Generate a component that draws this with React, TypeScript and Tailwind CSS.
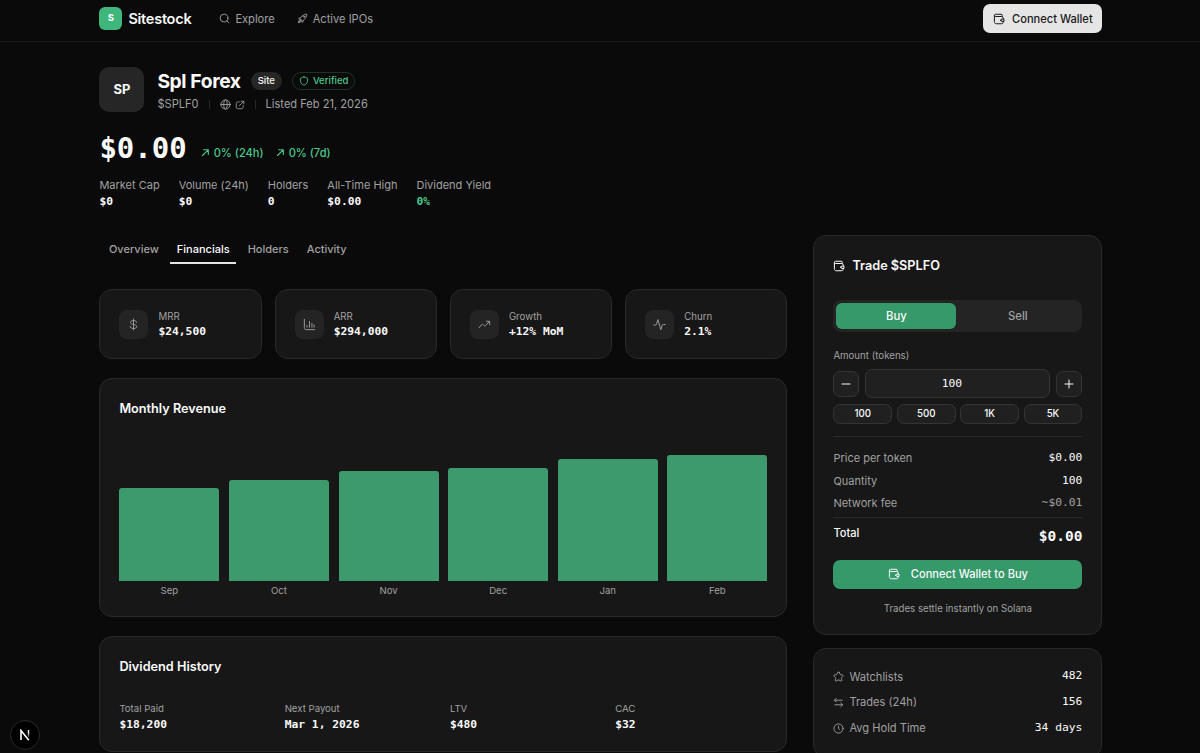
import type { ReactNode, SVGProps } from "react";
import { clsx } from "clsx";

type IconProps = SVGProps<SVGSVGElement>;

function Icon({ children, ...props }: IconProps & { children: ReactNode }) {
  return (
    <svg
      viewBox="0 0 24 24"
      fill="none"
      stroke="currentColor"
      strokeWidth={2}
      strokeLinecap="round"
      strokeLinejoin="round"
      {...props}
    >
      {children}
    </svg>
  );
}

const WalletIcon = (props: IconProps) => (
  <Icon {...props}>
    <path d="M15.500 14.500a2.300 2.300 0 0 1 2.300-2.300H22v4.600h-4.200a2.300 2.300 0 0 1-2.300-2.300Z" />
    <path d="M20.500 12v-1c0-2.800-1-4-4-4H5.300A2.500 2.500 0 0 1 2.800 4.800V17c0 3.200 1.300 4.500 4.500 4.500h9.200c3 0 4-1.200 4-4v-.700" />
    <path d="M18.500 7V5c0-1.800-.8-2.500-2.500-2.500H5.300A2.400 2.400 0 0 0 2.800 4.800" />
  </Icon>
);

const SearchIcon = (props: IconProps) => (
  <Icon {...props}>
    <circle cx="11" cy="11" r="8.500" />
    <path d="m17.500 17.500 4 4" />
  </Icon>
);

const RocketIcon = (props: IconProps) => (
  <Icon {...props}>
    <path d="M11.800 6.500 8.500 9.800c-1.800.1-3.600.8-5 2.700l4.200.9 3 3 .9 4.200c1.900-1.400 2.600-3.200 2.700-5l3.300-3.300c2.800-2.800 3.900-6 3.800-9.700-3.700-.1-6.800 1.100-9.600 3.900Z" />
    <path d="M7 14.500c-2.500.5-3.800 2.500-4 6.500 4-.2 6-1.500 6.500-4M3 21l6-6" />
    <circle cx="15.800" cy="8.200" r="1.300" />
  </Icon>
);

const ShieldIcon = (props: IconProps) => (
  <Icon {...props}>
    <path d="M12 2c-1.500 0-4 1.800-6.200 2.200C4.200 4.500 3.500 5 3.500 6.500v5c0 5.500 4 9 8.500 10.500 4.500-1.500 8.500-5 8.500-10.500v-5c0-1.500-.7-2-2.300-2.300C16 3.800 13.500 2 12 2Z" />
  </Icon>
);

const GlobeIcon = (props: IconProps) => (
  <Icon {...props}>
    <circle cx="12" cy="12" r="10" />
    <ellipse cx="12" cy="12" rx="4" ry="10" />
    <path d="M2 12h20" />
  </Icon>
);

const LinkIcon = (props: IconProps) => (
  <Icon {...props}>
    <path d="M10.500 4.500H7.500c-3 0-4.500 1.300-4.500 4.500v7.500c0 3.200 1.300 4.500 4.500 4.500H15c3.200 0 4.500-1.500 4.500-4.500v-3" />
    <path d="M14.500 3H21v6.500M20.500 3.500 10.500 13.500" />
  </Icon>
);

const ArrowUpRightIcon = (props: IconProps) => (
  <Icon {...props} strokeWidth={3}>
    <path d="M4 20 18.500 5.500M7 4.500h12.500V17" />
  </Icon>
);

const DollarIcon = (props: IconProps) => (
  <Icon {...props}>
    <path d="M17.500 8c0-2-2-3.500-5.500-3.500S6.500 6 6.500 8.200c0 4.800 11.500 2.600 11.500 7.600 0 2.200-2.300 3.700-6 3.700s-6-1.600-6-4M12 2v20" />
  </Icon>
);

const ChartIcon = (props: IconProps) => (
  <Icon {...props}>
    <path d="M2.500 2.500v15c0 3 1 4 4 4h15M7.500 17v-3M12 17V6.500M16.500 17v-7M20.500 17v-4" />
  </Icon>
);

const TrendIcon = (props: IconProps) => (
  <Icon {...props}>
    <path d="m2 18 4.500-5.500c1.200-1.500 2.200-1.500 3.400 0l.9 1.200c1.200 1.500 2.300 1.500 3.400-.1L21 6.500M15.500 6H21.500v6" />
  </Icon>
);

const PulseIcon = (props: IconProps) => (
  <Icon {...props}>
    <path d="M1.500 13h3c1.200 0 1.700-.4 2-1.500L9 3l5.500 18.500 2.500-8c.4-1.200 1-1.500 2-1.500h3.500" />
  </Icon>
);

const StarIcon = (props: IconProps) => (
  <Icon {...props}>
    <path d="m13.700 3.400 1.800 3.600c.3.500.9 1 1.500 1.100l3.200.5c2 .4 2.500 1.800 1.100 3.300l-2.500 2.500c-.4.400-.7 1.200-.5 1.800l.7 3.100c.6 2.400-.7 3.400-2.900 2.100l-3-1.800c-.6-.3-1.500-.3-2.100 0l-3 1.800c-2.200 1.300-3.500.3-2.900-2.100l.7-3.100c.1-.6-.1-1.400-.5-1.800l-2.500-2.500C1.300 10.400 1.800 9 3.800 8.600L7 8.100c.5-.1 1.200-.6 1.500-1.100l1.800-3.600c.9-1.900 2.500-1.900 3.400 0Z" />
  </Icon>
);

const TransferIcon = (props: IconProps) => (
  <Icon {...props}>
    <path d="M20 7H3M7 3 3 7l4 4M4 17h17M17 13l4 4-4 4" />
  </Icon>
);

const ClockIcon = (props: IconProps) => (
  <Icon {...props}>
    <circle cx="12" cy="12" r="10" />
    <path d="M12 7v5l3 2.500" />
  </Icon>
);

const MinusIcon = (props: IconProps) => (
  <Icon {...props}>
    <path d="M4 12h16" />
  </Icon>
);

const PlusIcon = (props: IconProps) => (
  <Icon {...props}>
    <path d="M12 4v16M4 12h16" />
  </Icon>
);

const mono = "font-['DejaVu_Sans_Mono',monospace]";
const card = "rounded-[13px] border border-[#292929] bg-[#171717]";

const quickStats = [
  { label: "Market Cap", value: "$0" },
  { label: "Volume (24h)", value: "$0" },
  { label: "Holders", value: "0" },
  { label: "All-Time High", value: "$0.00" },
  { label: "Dividend Yield", value: "0%", positive: true },
];

const metrics = [
  { label: "MRR", value: "$24,500", icon: DollarIcon },
  { label: "ARR", value: "$294,000", icon: ChartIcon },
  { label: "Growth", value: "+12% MoM", icon: TrendIcon },
  { label: "Churn", value: "2.1%", icon: PulseIcon },
];

const revenue = [
  { month: "Sep", height: 93.5 },
  { month: "Oct", height: 101.5 },
  { month: "Nov", height: 110 },
  { month: "Dec", height: 113.5 },
  { month: "Jan", height: 122.5 },
  { month: "Feb", height: 126 },
];

const dividends = [
  { label: "Total Paid", value: "$18,200" },
  { label: "Next Payout", value: "Mar 1, 2026" },
  { label: "LTV", value: "$480" },
  { label: "CAC", value: "$32" },
];

const activity = [
  { label: "Watchlists", value: "482", icon: StarIcon },
  { label: "Trades (24h)", value: "156", icon: TransferIcon },
  { label: "Avg Hold Time", value: "34 days", icon: ClockIcon },
];

function Header() {
  return (
    <header className="h-[42px] border-b border-[#191919]">
      <div className="ml-[99.400px] flex h-[37px] w-[1003px] items-center">
        <div className="flex items-center gap-[6px]">
          <div className="flex size-[23px] items-center justify-center rounded-[6px] bg-[#3fb67c] text-[9.500px] font-bold text-white">
            S
          </div>
          <span className="text-[14.500px] font-semibold tracking-[-0.25px]">Sitestock</span>
        </div>
        <nav className="ml-[28px] flex items-center gap-[22px] pt-px text-[11.100px] text-[#a1a1a1]">
          <a className="flex items-center gap-[5px]">
            <SearchIcon className="size-[11px]" />
            Explore
          </a>
          <a className="flex items-center gap-[5px]">
            <RocketIcon className="size-[11px]" />
            Active IPOs
          </a>
        </nav>
        <button className="ml-auto flex h-[29px] w-[119px] items-center justify-center gap-[7px] rounded-[7px] bg-[#e5e5e5] pt-px text-[11.100px] font-medium text-[#171717]">
          <WalletIcon className="size-[12px]" />
          Connect Wallet
        </button>
      </div>
    </header>
  );
}

function Hero() {
  return (
    <section>
      <div className="flex items-start gap-[13px]">
        <div className="flex size-[45px] items-center justify-center rounded-[10px] bg-[#262626] text-[13px] font-bold">
          SP
        </div>
        <div className="pt-px">
          <div className="flex h-[26px] items-center">
            <h1 className="text-[19.300px] font-bold tracking-[-0.4px]">Spl Forex</h1>
            <span className="ml-[10px] flex h-[18px] items-center rounded-full bg-[#262626] px-[7px] text-[9.500px] font-medium">
              Site
            </span>
            <span className="ml-[10px] flex h-[18px] items-center gap-[4px] rounded-full border border-[#1d3328] px-[6px] text-[9.500px] font-medium text-[#4cc88c]">
              <ShieldIcon className="size-[10px]" />
              Verified
            </span>
          </div>
          <div className="flex h-[21px] items-center text-[11.100px] text-[#a1a1a1]">
            <span>$SPLF0</span>
            <span className="mx-[10px] h-[9px] w-px bg-[#292929]" />
            <GlobeIcon className="size-[11px]" />
            <LinkIcon className="ml-[4px] size-[10px]" />
            <span className="mx-[10px] h-[9px] w-px bg-[#292929]" />
            <span>Listed Feb 21, 2026</span>
          </div>
        </div>
      </div>

      <div className="mt-[14px] flex h-[38px] items-center">
        <span className={clsx(mono, "text-[29px] leading-none font-bold")}>$0.00</span>
        <div className="mt-[10px] ml-[14px] flex gap-[12px] text-[11.100px] font-medium text-[#4cc88c]">
          <span className="flex items-center gap-[4px]">
            <ArrowUpRightIcon className="size-[9px]" />
            0% (24h)
          </span>
          <span className="flex items-center gap-[4px]">
            <ArrowUpRightIcon className="size-[9px]" />
            0% (7d)
          </span>
        </div>
      </div>

      <dl className="mt-[10px] flex gap-[19px] text-[11.300px] leading-[16px]">
        {quickStats.map((stat) => (
          <div key={stat.label}>
            <dt className="text-[11px] text-[#a1a1a1]">{stat.label}</dt>
            <dd className={clsx(mono, "mt-px font-semibold", stat.positive && "text-[#4cc88c]")}>{stat.value}</dd>
          </div>
        ))}
      </dl>
    </section>
  );
}

function Tabs() {
  return (
    <nav className="flex h-[29px] gap-[5px] px-[3px] text-[11px] font-medium text-[#a1a1a1]">
      {["Overview", "Financials", "Holders", "Activity"].map((tab) => (
        <button
          key={tab}
          className={clsx(
            "border-b-2 px-[6.500px] pt-[2px]",
            tab === "Financials" ? "border-[#e5e5e5] text-[#fafafa]" : "border-transparent"
          )}
        >
          {tab}
        </button>
      ))}
    </nav>
  );
}

function Metrics() {
  return (
    <div className="mt-[25px] grid grid-cols-4 gap-[13px]">
      {metrics.map(({ label, value, icon: MetricIcon }) => (
        <div key={label} className={clsx(card, "flex h-[70px] items-center gap-[10px] px-[19px]")}>
          <div className="flex size-[29px] items-center justify-center rounded-[8px] bg-[#242424] text-[#a1a1a1]">
            <MetricIcon className="size-[13px]" strokeWidth={1.7} />
          </div>
          <div className="pt-px">
            <p className="text-[9.700px] leading-[14px] text-[#a1a1a1]">{label}</p>
            <p className={clsx(mono, "text-[11.300px] leading-[15px] font-semibold")}>{value}</p>
          </div>
        </div>
      ))}
    </div>
  );
}

function RevenueChart() {
  return (
    <section className={clsx(card, "mt-[19px] flex h-[239px] flex-col px-[19px] pt-[20px] pb-[18px]")}>
      <h2 className="text-[12.700px] leading-[19px] font-semibold">Monthly Revenue</h2>
      <div className="mt-auto flex items-end gap-[9.600px]">
        {revenue.map((bar) => (
          <div key={bar.month} className="flex-1 text-center">
            <div className="rounded-t-[3px] bg-[#3d9a6c]" style={{ height: bar.height }} />
            <p className="mt-[3px] text-[9.600px] leading-[14px] text-[#a1a1a1]">{bar.month}</p>
          </div>
        ))}
      </div>
    </section>
  );
}

function Dividends() {
  return (
    <section className={clsx(card, "mt-[19px] h-[116px] px-[19px] pt-[20px]")}>
      <h2 className="text-[12.700px] leading-[19px] font-semibold">Dividend History</h2>
      <div className="mt-[26px] grid grid-cols-4 gap-[13px]">
        {dividends.map((item) => (
          <div key={item.label}>
            <p className="text-[9.600px] leading-[14px] text-[#a1a1a1]">{item.label}</p>
            <p className={clsx(mono, "text-[11.300px] leading-[17px] font-semibold")}>{item.value}</p>
          </div>
        ))}
      </div>
    </section>
  );
}

function TradePanel() {
  return (
    <section className={clsx(card, "h-[400px] px-[19px] pt-[20px]")}>
      <h2 className="flex h-[19px] items-center gap-[7px] text-[12.700px] font-semibold">
        <WalletIcon className="size-[12px]" />
        Trade $SPLFO
      </h2>

      <div className="mt-[25px] flex h-[32px] rounded-[8px] bg-[#242424] p-[3px] text-[11.300px] font-medium">
        <button className="w-[120px] rounded-[6px] bg-[#35996a]">Buy</button>
        <button className="flex-1 text-[#a1a1a1]">Sell</button>
      </div>

      <p className="mt-[17px] text-[9.700px] leading-[14px] text-[#a1a1a1]">Amount (tokens)</p>
      <div className="mt-[6px] flex items-center gap-[6px]">
        <button className="flex size-[26px] items-center justify-center rounded-[7px] border border-[#343434] bg-[#202020]">
          <MinusIcon className="size-[12px]" />
        </button>
        <div
          className={clsx(
            mono,
            "flex h-[29px] flex-1 items-center justify-center rounded-[7px] border border-[#343434] bg-[#202020] pt-px pr-[12px] text-[11.300px]"
          )}
        >
          100
        </div>
        <button className="flex size-[26px] items-center justify-center rounded-[7px] border border-[#343434] bg-[#202020]">
          <PlusIcon className="size-[12px]" />
        </button>
      </div>
      <div className="mt-[6px] grid grid-cols-4 gap-[4.500px] text-[9.700px] font-medium">
        {["100", "500", "1K", "5K"].map((amount) => (
          <button key={amount} className="h-[20px] rounded-[7px] border border-[#343434] bg-[#202020]">
            {amount}
          </button>
        ))}
      </div>

      <div className="mt-[12px] border-t border-[#292929] pt-[10px] text-[11.300px] leading-[22.600px] text-[#a1a1a1]">
        <div className="flex justify-between">
          <span className="text-[11px]">Price per token</span>
          <span className={clsx(mono, "text-[#fafafa]")}>$0.00</span>
        </div>
        <div className="flex justify-between">
          <span className="text-[11px]">Quantity</span>
          <span className={clsx(mono, "text-[#fafafa]")}>100</span>
        </div>
        <div className="flex justify-between">
          <span className="text-[11px]">Network fee</span>
          <span className={mono}>~$0.01</span>
        </div>
      </div>
      <div className="mt-[2px] flex h-[43px] justify-between border-t border-[#292929] pt-[7px] font-medium">
        <span className="text-[11.100px] leading-[16px]">Total</span>
        <span className={clsx(mono, "text-[14.500px] leading-[22px] font-semibold")}>$0.00</span>
      </div>

      <button className="flex h-[29px] w-full items-center justify-center gap-[11px] rounded-[7px] bg-[#35996a] text-[11.100px] font-medium">
        <WalletIcon className="size-[12px]" />
        Connect Wallet to Buy
      </button>
      <p className="mt-[13px] text-center text-[9.700px] leading-[14px] text-[#a1a1a1]">
        Trades settle instantly on Solana
      </p>
    </section>
  );
}

function ActivityPanel() {
  return (
    <section className={clsx(card, "mt-[13px] h-[110px] px-[19px] pt-[15px] text-[11.300px]")}>
      {activity.map(({ label, value, icon: RowIcon }) => (
        <div key={label} className="flex h-[25.800px] items-center">
          <RowIcon className="mr-[5px] size-[11px] text-[#a1a1a1]" />
          <span className="text-[11.100px] text-[#a1a1a1]">{label}</span>
          <span className={clsx(mono, "ml-auto")}>{value}</span>
        </div>
      ))}
    </section>
  );
}

function DevBadge() {
  return (
    <div className="fixed bottom-[3px] left-[10px] flex size-[30px] items-center justify-center rounded-full border border-[#2a2a2a] bg-black">
      <svg viewBox="0 0 12 12" className="size-[12px]" fill="none" strokeWidth={1.6}>
        <defs>
          <linearGradient id="stem" x1="0" y1="0" x2="0" y2="1">
            <stop offset="0.3" stopColor="#fff" />
            <stop offset="1" stopColor="#fff" stopOpacity="0" />
          </linearGradient>
        </defs>
        <path d="M2 11V1.500L9.800 11.300" stroke="#fff" />
        <rect x="8.800" y="1" width="1.400" height="8" fill="url(#stem)" />
      </svg>
    </div>
  );
}

export default function App() {
  return (
    <div className="h-[753px] overflow-hidden bg-[#0a0a0a] font-[Inter,sans-serif] text-[#fafafa]">
      <Header />
      <main className="ml-[99.400px] w-[1003px] pt-[25px]">
        <Hero />
        <div className="mt-[25px] flex gap-[26px]">
          <div className="w-[688px]">
            <Tabs />
            <Metrics />
            <RevenueChart />
            <Dividends />
          </div>
          <aside className="flex-1">
            <TradePanel />
            <ActivityPanel />
          </aside>
        </div>
      </main>
      <DevBadge />
    </div>
  );
}
